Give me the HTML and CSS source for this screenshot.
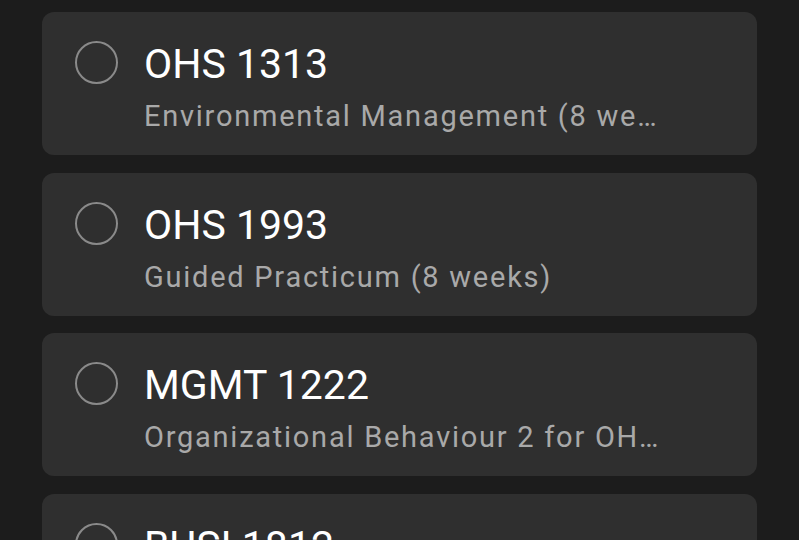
FILE: index.html
```html
<!DOCTYPE html>
<html lang="en">
<head>
<meta charset="utf-8">
<title>Courses</title>
<link rel="stylesheet" href="styles.css">
</head>
<body>
<div class="list">
  <div class="card">
    <span class="radio"></span>
    <div class="text">
      <div class="title">OHS 1313</div>
      <div class="subtitle">Environmental Management (8 weeks)</div>
    </div>
  </div>
  <div class="card">
    <span class="radio"></span>
    <div class="text">
      <div class="title">OHS 1993</div>
      <div class="subtitle">Guided Practicum (8 weeks)</div>
    </div>
  </div>
  <div class="card">
    <span class="radio"></span>
    <div class="text">
      <div class="title">MGMT 1222</div>
      <div class="subtitle">Organizational Behaviour 2 for OHS Professionals</div>
    </div>
  </div>
  <div class="card">
    <span class="radio"></span>
    <div class="text">
      <div class="title">BUSI 1812</div>
      <div class="subtitle">Business Communication</div>
    </div>
  </div>
</div>
</body>
</html>
```

FILE: styles.css
```css
html, body {
  margin: 0;
  padding: 0;
  background: #1c1c1c;
  height: 100%;
  overflow: hidden;
}
body {
  font-family: Roboto, "Noto Sans", sans-serif;
}
.list {
  display: flex;
  flex-direction: column;
  gap: 17.6px;
  padding: 12px 42px 0 42px;
}
.card {
  display: flex;
  align-items: flex-start;
  height: 143px;
  flex-shrink: 0;
  box-sizing: border-box;
  padding: 28px 0 0 33px;
  background: #2f2f2f;
  border-radius: 12px;
}
.radio {
  flex: 0 0 auto;
  width: 39px;
  height: 39px;
  margin-top: 1px;
  border: 2.5px solid #8a8a8a;
  border-radius: 50%;
}
.text {
  margin-left: 26px;
  width: 522px;
  min-width: 0;
}
.title {
  color: #ffffff;
  font-size: 41px;
  line-height: 48px;
  white-space: nowrap;
}
.subtitle {
  margin-top: 8px;
  color: #a9a9a9;
  font-size: 29px;
  line-height: 40px;
  letter-spacing: 1.75px;
  white-space: nowrap;
  overflow: hidden;
  text-overflow: ellipsis;
}
```
